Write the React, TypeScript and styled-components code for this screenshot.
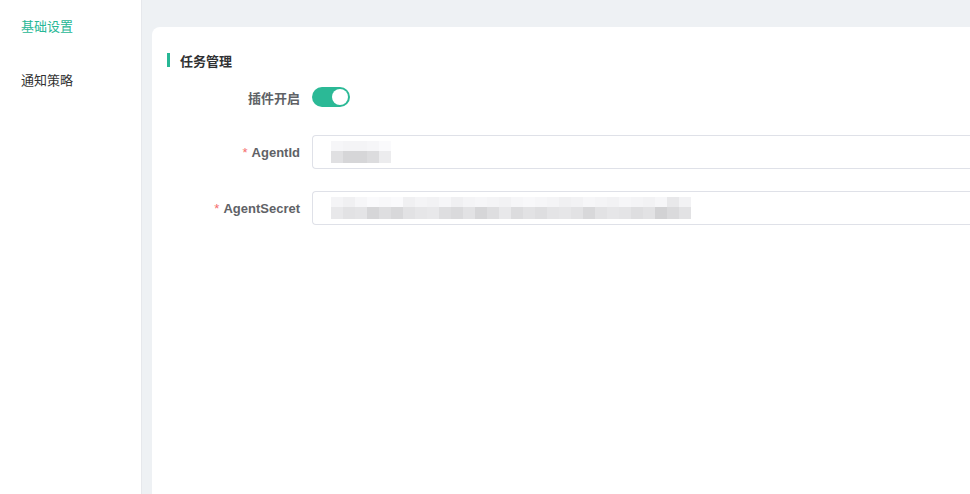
import React from "react";
import styled, { createGlobalStyle } from "styled-components";

const GlobalStyle = createGlobalStyle`
  html, body { margin: 0; padding: 0; }
  body {
    font-family: "Liberation Sans", "Noto Sans CJK SC", Arial, sans-serif;
    background: #ffffff;
  }
`;

const Layout = styled.div`
  display: flex;
  width: 970px;
  height: 494px;
  overflow: hidden;
`;

const Sidebar = styled.nav`
  width: 141px;
  flex-shrink: 0;
  border-right: 1px solid #e6e8ec;
  display: flex;
  flex-direction: column;
  gap: 14px;
  padding-top: 6px;
  background: #fff;
`;

const NavItem = styled.div<{ $active?: boolean }>`
  padding-left: 21px;
  line-height: 40px;
  height: 40px;
  font-size: 13px;
  font-family: "Noto Sans CJK SC", sans-serif;
  color: ${(p) => (p.$active ? "#27b795" : "#333333")};
`;

const Main = styled.main`
  flex: 1;
  background: #eef1f4;
  padding: 27px 0 0 10px;
  display: flex;
  min-width: 0;
`;

const Card = styled.section`
  flex: 1;
  background: #ffffff;
  border-radius: 8px 0 0 0;
  padding: 23px 0 0 15px;
  min-width: 0;
`;

const SectionTitle = styled.h3`
  margin: 0 0 10px;
  display: flex;
  align-items: center;
  gap: 10px;
  height: 20px;
  font-size: 13px;
  font-weight: 700;
  color: #303133;
  font-family: "Noto Sans CJK SC", sans-serif;
  &::before {
    content: "";
    width: 3px;
    height: 14px;
    background: #27b795;
  }
`;

const FormRow = styled.div<{ $gap: number }>`
  display: flex;
  align-items: center;
  height: 34px;
  margin-bottom: ${(p) => p.$gap}px;
`;

const Label = styled.label`
  width: 145px;
  flex-shrink: 0;
  box-sizing: border-box;
  padding-right: 12px;
  text-align: right;
  font-size: 13px;
  font-weight: 700;
  color: #606266;
  font-family: "Liberation Sans", "Noto Sans CJK SC", sans-serif;
`;

const Required = styled.span`
  color: #f56c6c;
  font-weight: 400;
  margin-right: 4px;
`;

const Switch = styled.div`
  width: 38px;
  height: 20px;
  border-radius: 10px;
  background: #2bb996;
  display: flex;
  align-items: center;
  justify-content: flex-end;
  padding: 0 2px;
  box-sizing: border-box;
  &::after {
    content: "";
    width: 16px;
    height: 16px;
    border-radius: 50%;
    background: #fff;
  }
`;

const InputBox = styled.div`
  flex: 1;
  height: 34px;
  box-sizing: border-box;
  border: 1px solid #dfe1e8;
  border-right: none;
  border-radius: 4px 0 0 4px;
  display: flex;
  align-items: center;
  padding-left: 18px;
`;

const Mosaic = styled.div`
  display: flex;
  flex-direction: column;
`;

const MosaicRow = styled.div`
  display: flex;
`;

const Cell = styled.div<{ $h: number }>`
  width: 12px;
  height: ${(p) => p.$h}px;
`;

const shade = (v: number) => `rgb(${v},${v},${v + 2})`;

const idTop = [246, 244, 244, 246, 250];
const idBottom = [224, 214, 214, 220, 236];
const secretTop = [244, 240, 246, 250, 248, 250, 240, 244, 242, 246, 240, 244, 246, 244, 242, 246, 248, 246, 244, 240, 242, 246, 244, 242, 246, 244, 242, 246, 232, 242];
const secretBottom = [232, 226, 228, 214, 222, 216, 226, 230, 232, 222, 218, 226, 214, 222, 232, 220, 226, 222, 228, 230, 226, 216, 226, 230, 228, 222, 226, 210, 218, 226];

const Pixels: React.FC<{ top: number[]; bottom: number[] }> = ({ top, bottom }) => (
  <Mosaic>
    <MosaicRow>
      {top.map((v, i) => (
        <Cell key={i} $h={10} style={{ background: shade(v) }} />
      ))}
    </MosaicRow>
    <MosaicRow>
      {bottom.map((v, i) => (
        <Cell key={i} $h={12} style={{ background: shade(v) }} />
      ))}
    </MosaicRow>
  </Mosaic>
);

export default function App() {
  return (
    <>
      <GlobalStyle />
      <Layout>
        <Sidebar>
          <NavItem $active>基础设置</NavItem>
          <NavItem>通知策略</NavItem>
        </Sidebar>
        <Main>
          <Card>
            <SectionTitle>任务管理</SectionTitle>
            <FormRow $gap={21}>
              <Label>插件开启</Label>
              <Switch />
            </FormRow>
            <FormRow $gap={22}>
              <Label>
                <Required>*</Required>AgentId
              </Label>
              <InputBox>
                <Pixels top={idTop} bottom={idBottom} />
              </InputBox>
            </FormRow>
            <FormRow $gap={0}>
              <Label>
                <Required>*</Required>AgentSecret
              </Label>
              <InputBox>
                <Pixels top={secretTop} bottom={secretBottom} />
              </InputBox>
            </FormRow>
          </Card>
        </Main>
      </Layout>
    </>
  );
}
